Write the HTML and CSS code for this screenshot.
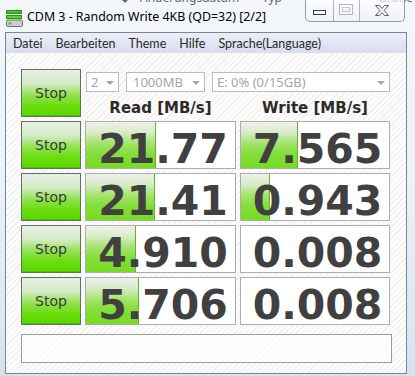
FILE: index.html
```html
<!DOCTYPE html>
<html lang="de">
<head>
    <meta charset="UTF-8">
    <title>CDM 3 - Random Write 4KB (QD=32) [2/2]</title>
    <link rel="stylesheet" href="styles.css">
</head>
<body>
    <div class="behind">
        <span class="sort"></span>
        <span class="col c1">Änderungsdatum</span>
        <span class="col c2">Typ</span>
        <span class="col c3">Größe</span>
    </div>

    <div class="window">
        <div class="titlebar">
            <svg class="app-icon" width="17" height="17" viewBox="0 0 17 17">
                <rect x="0.5" y="0.5" width="15" height="3" fill="#3fc41a" stroke="#2f8f18" stroke-width="1"/>
                <rect x="0.5" y="5.5" width="15" height="3" fill="#57d82a" stroke="#2f8f18" stroke-width="1"/>
                <rect x="0.5" y="10" width="16" height="6.5" rx="1.5" fill="#c9cfd3" stroke="#6b7378" stroke-width="1"/>
                <rect x="2.5" y="12.5" width="3" height="2" fill="#3fc41a"/>
            </svg>
            <span class="title">CDM 3 - Random Write 4KB (QD=32) [2/2]</span>
            <div class="caption">
                <span class="cap-btn cap-min">
                    <svg width="14" height="6" viewBox="0 0 14 6"><rect x="0.5" y="0.5" width="12" height="4" fill="#f4f4f4" stroke="#3c3c3c"/></svg>
                </span>
                <span class="cap-btn cap-max">
                    <svg width="15" height="12" viewBox="0 0 15 12"><rect x="0.5" y="0.5" width="13" height="10" fill="none" stroke="#b4b8bc"/><rect x="3.5" y="3.5" width="7" height="4" fill="none" stroke="#c4c8cc"/></svg>
                </span>
                <span class="cap-btn cap-close">
                    <svg width="16" height="13" viewBox="0 0 16 13"><path d="M1.5 1.5h4l2.5 3 2.5-3h4l-4.5 5 4.5 5h-4l-2.5-3-2.5 3h-4l4.5-5z" fill="#fbfbfb" stroke="#5a5e62"/></svg>
                </span>
            </div>
        </div>

        <div class="client">
            <div class="menubar">
                <span>Datei</span>
                <span>Bearbeiten</span>
                <span>Theme</span>
                <span>Hilfe</span>
                <span>Sprache(Language)</span>
            </div>

            <div class="panel">
                <div class="grid">
                    <button class="stop">Stop</button>
                    <div class="settings">
                        <div class="combos">
                            <div class="combo combo-count">2</div>
                            <div class="combo combo-size">1000MB</div>
                            <div class="combo combo-drive">E: 0% (0/15GB)</div>
                        </div>
                        <div class="heads">
                            <span>Read [MB/s]</span>
                            <span>Write [MB/s]</span>
                        </div>
                    </div>

                    <button class="stop">Stop</button>
                    <div class="cell"><div class="bar" style="width: 70px"></div><span class="value">21.77</span></div>
                    <div class="cell"><div class="bar" style="width: 57px"></div><span class="value">7.565</span></div>

                    <button class="stop">Stop</button>
                    <div class="cell"><div class="bar" style="width: 69px"></div><span class="value">21.41</span></div>
                    <div class="cell"><div class="bar" style="width: 29px"></div><span class="value">0.943</span></div>

                    <button class="stop">Stop</button>
                    <div class="cell"><div class="bar" style="width: 50px"></div><span class="value">4.910</span></div>
                    <div class="cell"><span class="value">0.008</span></div>

                    <button class="stop">Stop</button>
                    <div class="cell"><div class="bar" style="width: 53px"></div><span class="value">5.706</span></div>
                    <div class="cell"><span class="value">0.008</span></div>
                </div>

                <div class="status"></div>
            </div>
        </div>
    </div>
</body>
</html>
```

FILE: styles.css
```css
* {
    margin: 0;
    padding: 0;
    box-sizing: border-box;
}

body {
    width: 415px;
    height: 376px;
    overflow: hidden;
    position: relative;
    font-family: 'Noto Sans', 'DejaVu Sans', sans-serif;
    background: linear-gradient(to bottom, #f4f7fa 0%, #eaf1f7 50%, #d3e4ef 100%);
}

/* window of the explorer behind the glass */
.behind {
    position: absolute;
    top: -11px;
    left: 0;
    width: 415px;
    height: 16px;
    font-size: 12px;
    color: #3a4450;
    opacity: 0.8;
}

.behind .col {
    position: absolute;
    top: 0;
}

.behind .c1 { left: 140px; }
.behind .c2 { left: 262px; }
.behind .c3 { left: 378px; }

.behind .sort {
    position: absolute;
    left: 121px;
    top: 10px;
    border-left: 4px solid transparent;
    border-right: 4px solid transparent;
    border-top: 4px solid #3a4450;
}

.window {
    position: relative;
    display: flex;
    flex-direction: column;
    height: 376px;
}

.titlebar {
    height: 32px;
    display: flex;
    align-items: flex-start;
    padding-left: 6px;
}

.app-icon {
    margin-top: 10px;
    flex-shrink: 0;
}

.title {
    margin-left: 4px;
    margin-top: 8px;
    font-size: 12.4px;
    color: #000;
    white-space: nowrap;
}

.caption {
    margin-left: auto;
    margin-right: 10px;
    margin-top: -1px;
    display: flex;
    height: 23px;
    border: 1px solid rgba(70, 80, 90, 0.55);
    border-top: none;
    border-radius: 0 0 5px 5px;
    background: linear-gradient(to bottom, rgba(255, 255, 255, 0.7), rgba(235, 242, 248, 0.6));
}

.cap-btn {
    display: flex;
    justify-content: center;
    align-items: center;
    height: 100%;
}

.cap-min {
    width: 28px;
    border-right: 1px solid rgba(70, 80, 90, 0.4);
    padding-top: 5px;
}

.cap-max {
    width: 26px;
    border-right: 1px solid rgba(70, 80, 90, 0.4);
}

.cap-close {
    width: 44px;
}

.client {
    margin: 0 8px 0 5px;
    height: 342px;
    border: 1px solid #7a8790;
    display: flex;
    flex-direction: column;
}

.menubar {
    height: 20px;
    display: flex;
    align-items: center;
    padding-left: 1px;
    font-family: Lato, 'Noto Sans', sans-serif;
    font-size: 12.5px;
    color: #2a2a2a;
    background: linear-gradient(to bottom, #eceef7, #d8dcef);
}

.menubar span {
    padding: 0 7px 0 6px;
}

.panel {
    flex: 1;
    padding: 16px 0 0 15px;
    background: repeating-linear-gradient(135deg, #fcfcfc 0 3px, #efefef 3px 4px);
}

.grid {
    display: grid;
    grid-template-columns: 60px 151px 150px;
    grid-auto-rows: 48px;
    column-gap: 4px;
    row-gap: 4px;
}

.stop {
    font-family: 'DejaVu Sans', sans-serif;
    font-size: 14px;
    color: #3a3a3a;
    border: 1px solid #5f735c;
    background: linear-gradient(to bottom, #e9efe7 0%, #d3ebc4 30%, #8fe24f 55%, #66dc08 80%, #5ad600 100%);
    box-shadow: inset 0 -1px 0 #4fbf00;
}

.settings {
    grid-column: 2 / 4;
    display: flex;
    flex-direction: column;
}

.combos {
    margin-top: 3px;
    display: flex;
    gap: 7px;
    padding-left: 1px;
}

.combo {
    position: relative;
    height: 20px;
    line-height: 18px;
    padding-left: 4px;
    font-size: 13px;
    color: #a6a6a6;
    background: #fff;
    border: 1px solid #bcbcbc;
}

.combo::after {
    content: '';
    position: absolute;
    right: 4px;
    top: 8px;
    border-left: 4px solid transparent;
    border-right: 4px solid transparent;
    border-top: 4px solid #a6a6a6;
}

.combo-count { width: 33px; }
.combo-size { width: 79px; padding-left: 6px; }
.combo-drive { width: 178px; }

.heads {
    margin-top: 7px;
    display: grid;
    grid-template-columns: 151px 150px;
    column-gap: 4px;
    font-family: 'DejaVu Sans', sans-serif;
    font-weight: bold;
    font-size: 15px;
    line-height: 18px;
    color: #2f2a26;
    text-align: center;
}

.cell {
    position: relative;
    background: #fff;
    border: 1px solid #adadad;
    text-align: center;
    padding: 7px 0 0 5px;
    overflow: hidden;
}

.bar {
    position: absolute;
    left: 0;
    top: 0;
    bottom: 0;
    border-right: 1px solid #5cb52a;
    background: linear-gradient(to bottom, #eef0ec 0%, #d9ecca 22%, #a6e470 45%, #82de38 70%, #76dc22 100%);
}

.value {
    position: relative;
    font-family: 'DejaVu Sans', sans-serif;
    font-weight: bold;
    font-size: 41px;
    line-height: 40px;
    color: #404040;
}

.status {
    margin-top: 9px;
    width: 371px;
    height: 29px;
    border: 1px solid #9c9c9c;
    background: rgba(255, 255, 255, 0.6);
}
```
